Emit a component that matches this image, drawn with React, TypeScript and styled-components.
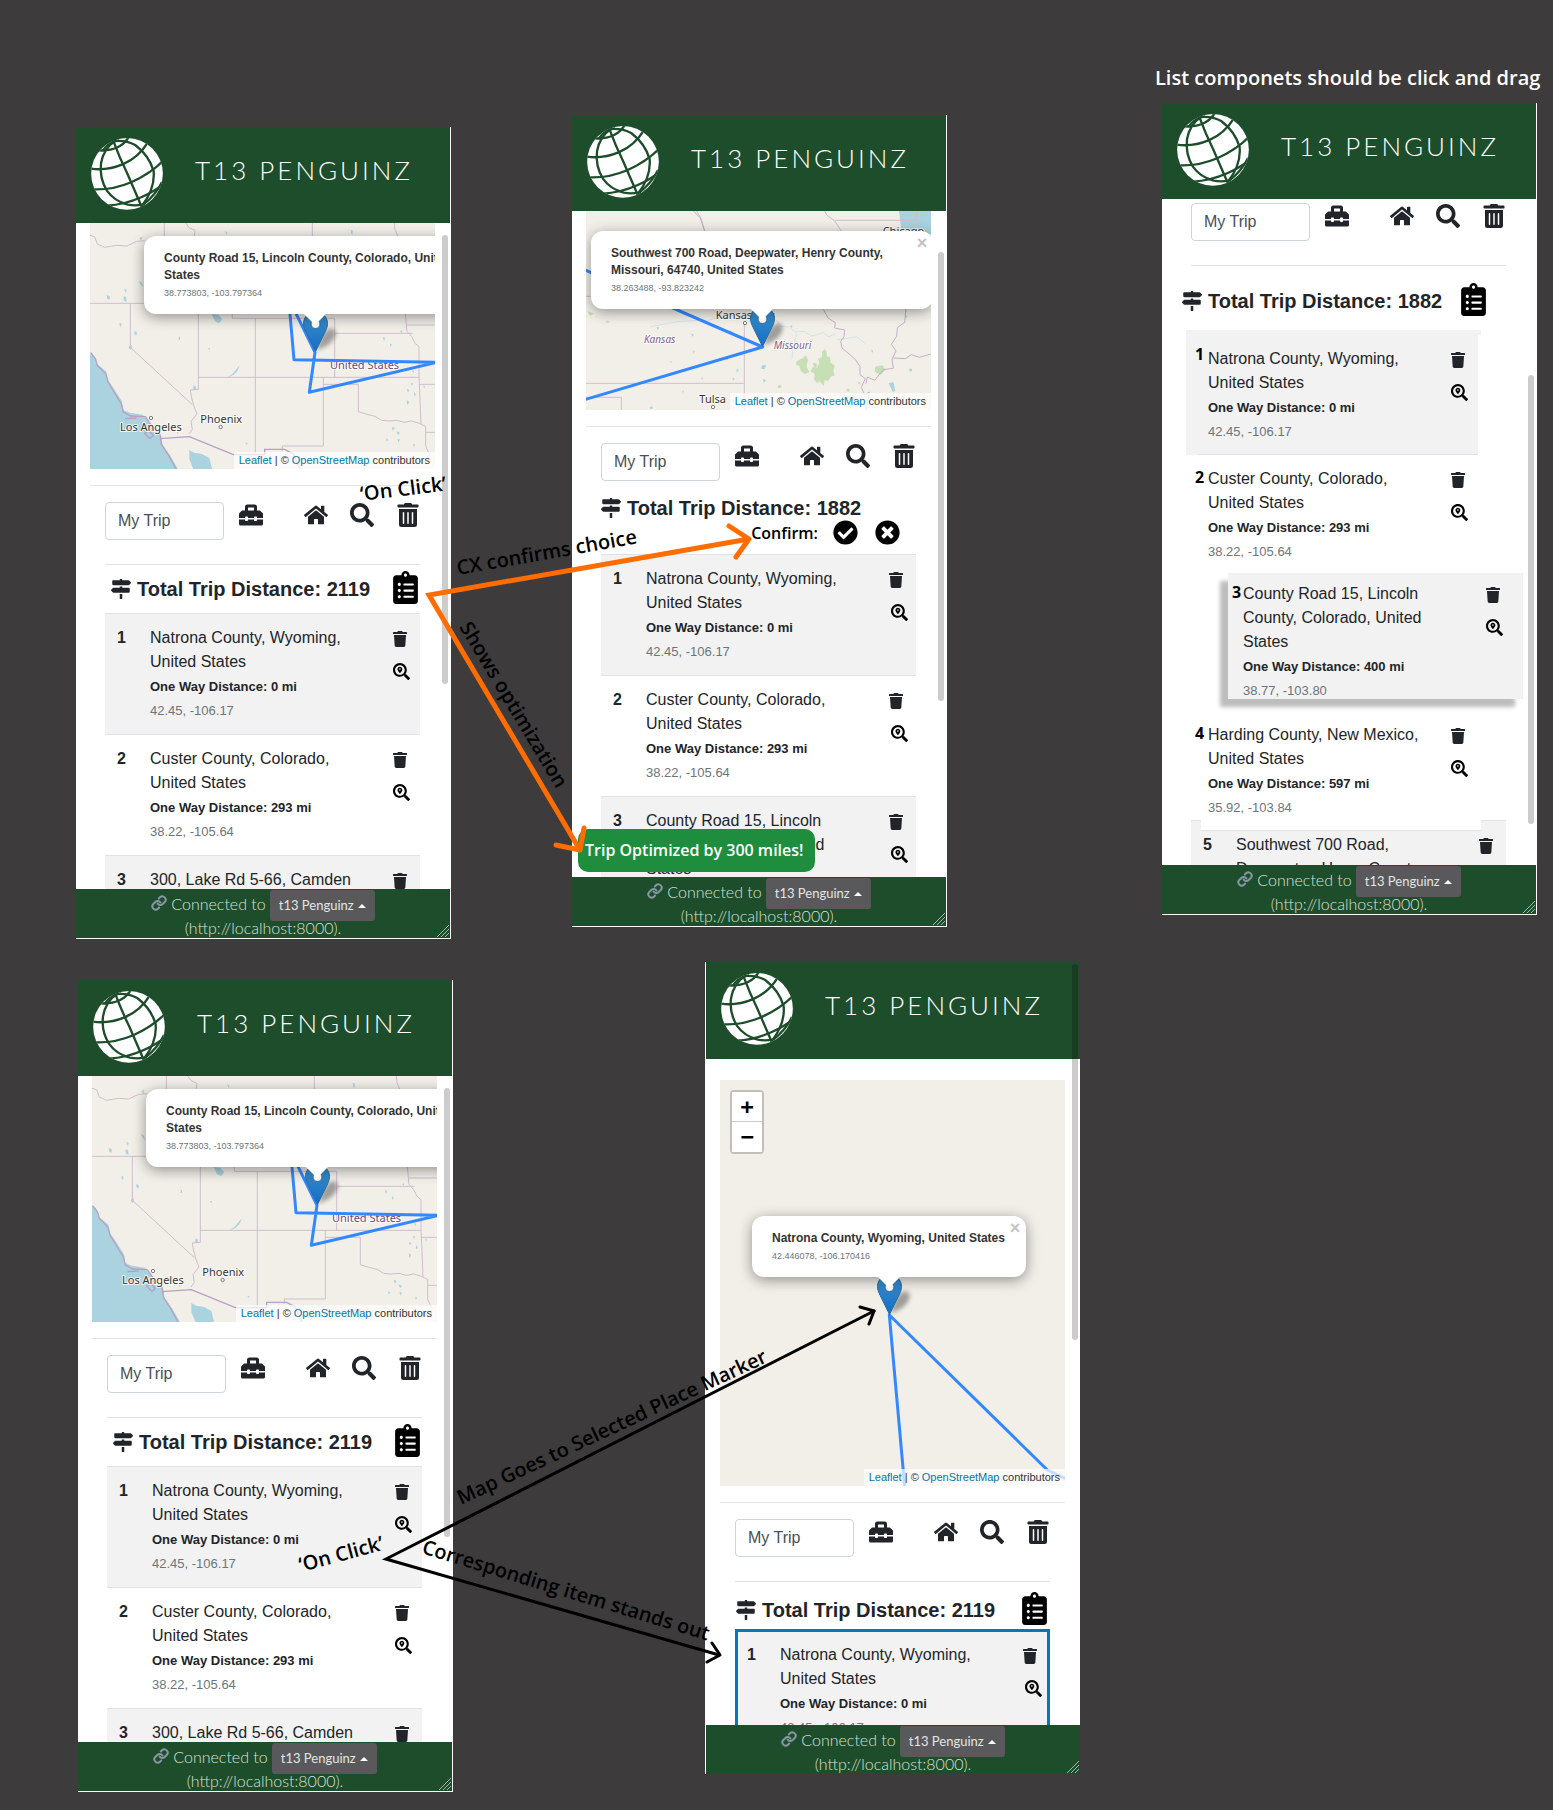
import React from "react";
import styled, { createGlobalStyle, css } from "styled-components";
import {
  FaCheckCircle,
  FaClipboardList,
  FaHome,
  FaMapSigns,
  FaSearch,
  FaSearchLocation,
  FaTimesCircle,
  FaToolbox,
  FaTrash,
  FaTrashAlt,
} from "react-icons/fa";
import { Link as LinkIcon } from "lucide-react";

const color = {
  canvas: "#3d3b3c",
  green: "#1e4d2b",
  ink: "#212529",
  muted: "#6c757d",
  line: "#dee2e6",
  stripe: "#f2f2f2",
  route: "#3388ff",
  land: "#f2efe9",
  water: "#aad3df",
  border: "#cfbdcd",
  orange: "#ff6c00",
};

const sans = `"Liberation Sans", Arial, sans-serif`;
const brand = `Lato, "Open Sans", sans-serif`;
const note = `"Open Sans", "Noto Sans", sans-serif`;

const GlobalStyle = createGlobalStyle`
  *, *::before, *::after { box-sizing: border-box; }
  body { margin: 0; background: ${color.canvas}; color: ${color.ink}; font: 16px/24px ${sans}; }
  button, input { font: inherit; margin: 0; }
`;

/* ---------- canvas ---------- */

const Canvas = styled.main`
  position: relative;
  min-height: 100vh;
  overflow: hidden;
`;

const Artboard = styled.section<{ $x: number; $y: number; $edge?: "left" }>`
  position: absolute;
  left: ${(p) => p.$x}px;
  top: ${(p) => p.$y}px;
  width: 375px;
  height: 812px;
  display: flex;
  flex-direction: column;
  background: #fff;
  ${(p) =>
    p.$edge === "left"
      ? css`
          border-left: 1px solid #fff;
        `
      : css`
          border-right: 1px solid #fff;
          border-bottom: 1px solid #fff;
        `}
`;

const Note = styled.p<{ $x: number; $y: number; $angle?: number; $light?: boolean }>`
  position: absolute;
  left: ${(p) => p.$x}px;
  top: ${(p) => p.$y}px;
  margin: 0;
  font: 600 20px/24px ${note};
  white-space: nowrap;
  color: ${(p) => (p.$light ? "#fff" : "#000")};
  transform: rotate(${(p) => p.$angle ?? 0}deg);
  transform-origin: 0 19px;
`;

const ArrowLayer = styled.svg`
  position: absolute;
  left: 0;
  top: 0;
  pointer-events: none;
`;

const Toast = styled.div`
  position: absolute;
  left: 578px;
  top: 829px;
  padding: 9px 12px 10px 7px;
  border-radius: 10px;
  background: #1e8e3e;
  color: #fff;
  font: 600 16px/24px ${note};
  white-space: nowrap;
`;

/* ---------- phone chrome ---------- */

const Header = styled.header<{ $tall?: boolean }>`
  flex: none;
  height: ${(p) => (p.$tall ? 97 : 96)}px;
  display: flex;
  align-items: flex-start;
  gap: 32px;
  padding: 11px 15px;
  background: ${color.green};
`;

const Brand = styled.h1`
  margin: 14px 0 0;
  color: #fff;
  font: 300 26px/36px ${brand};
  letter-spacing: 3px;
  white-space: nowrap;
`;

const Body = styled.div<{ $top?: number }>`
  flex: 1;
  min-height: 0;
  overflow: hidden;
  padding-top: ${(p) => p.$top ?? 0}px;
`;

const Footer = styled.footer`
  position: relative;
  flex: none;
  height: 49px;
  overflow: hidden;
  background: ${color.green};
  color: #d8e0da;
  font: 300 16px/24px ${brand};
  text-align: center;
`;

const FooterLine = styled.div`
  height: 27px;
  display: flex;
  justify-content: center;
  align-items: flex-start;
  gap: 4px;
  padding-top: 1px;
  svg {
    margin-top: 5px;
  }
  span {
    padding-top: 2px;
  }
`;

const ServerButton = styled.button`
  display: flex;
  align-items: center;
  gap: 4px;
  padding: 5px 9px;
  border: 0;
  border-radius: 3px;
  background: #59595b;
  color: #e4e4e4;
  font: 400 13px/21px ${brand};
  &::after {
    content: "";
    border: 4px solid transparent;
    border-top: 0;
    border-bottom-color: #fff;
  }
`;

const Grip = styled.svg`
  position: absolute;
  right: 1px;
  bottom: 1px;
`;

const Scrollbar = styled.div<{ $top: number; $height: number }>`
  position: absolute;
  right: 2px;
  top: ${(p) => p.$top}px;
  width: 6px;
  height: ${(p) => p.$height}px;
  border-radius: 3px;
  background: rgba(0, 0, 0, 0.2);
`;

/* ---------- map ---------- */

const MapFrame = styled.div<{ $height: number }>`
  position: relative;
  height: ${(p) => p.$height}px;
  margin: 0 15px 16px 14px;
  overflow: hidden;
  background: ${color.land};
  > svg:first-child {
    display: block;
    width: 100%;
    height: 100%;
  }
`;

const Pin = styled.div<{ $x: number; $y: number }>`
  position: absolute;
  left: ${(p) => p.$x}px;
  top: ${(p) => p.$y}px;
  width: 25px;
  height: 41px;
  svg {
    display: block;
    overflow: visible;
  }
`;

const Popup = styled.div<{ $width: number }>`
  position: absolute;
  left: 12px;
  bottom: 38px;
  width: ${(p) => p.$width}px;
  margin-left: -${(p) => Math.round(p.$width / 2)}px;
  padding: 14px 20px 13px;
  border-radius: 12px;
  background: #fff;
  box-shadow: 0 3px 14px rgba(0, 0, 0, 0.4);
  color: #333;
  font: 700 12px/17px ${sans};
  &::after {
    content: "";
    position: absolute;
    left: 50%;
    top: 100%;
    margin-left: -11px;
    border: 11px solid transparent;
    border-top-color: #fff;
    border-bottom: 0;
  }
  small {
    font-size: 9px;
    font-weight: 400;
    line-height: 1;
    color: ${color.muted};
  }
`;

const PopupClose = styled.button`
  position: absolute;
  right: 4px;
  top: 4px;
  padding: 0;
  border: 0;
  background: none;
  width: 14px;
  height: 16px;
  color: #c3c3c3;
  font: 700 18px/16px ${sans};
`;

const Attribution = styled.div`
  position: absolute;
  right: 0;
  bottom: 0;
  padding: 0 5px;
  background: rgba(255, 255, 255, 0.7);
  color: #333;
  font: 11px/17px ${sans};
  a {
    color: #0078a8;
    text-decoration: none;
  }
`;

const ZoomControl = styled.div`
  position: absolute;
  left: 10px;
  top: 10px;
  width: 34px;
  border: 2px solid rgba(0, 0, 0, 0.2);
  border-radius: 4px;
  background-clip: padding-box;
  button {
    display: block;
    width: 30px;
    height: 30px;
    padding: 0;
    border: 0;
    background: #fff;
    color: #000;
    font: 700 22px/30px "DejaVu Sans Mono", monospace;
  }
  button:first-child {
    border-bottom: 1px solid #ccc;
  }
`;

/* ---------- trip controls ---------- */

const Rule = styled.hr`
  height: 1px;
  margin: 0 15px 16px 14px;
  border: 0;
  background: rgba(0, 0, 0, 0.1);
`;

const Toolbar = styled.div<{ $tight?: boolean }>`
  display: flex;
  align-items: flex-start;
  margin: 0 30px ${(p) => (p.$tight ? 15 : 24)}px 29px;
  height: 38px;
  button {
    padding-top: 1px;
  }
`;

const TripName = styled.input`
  width: 119px;
  height: 38px;
  margin-right: 15px;
  padding: 6px 12px;
  border: 1px solid #ced4da;
  border-radius: 4px;
  background: #fff;
  color: #495057;
`;

const ToolGroup = styled.div`
  display: flex;
  gap: 22px;
  margin-left: auto;
`;

const IconButton = styled.button<{ $black?: boolean }>`
  display: block;
  padding: 0;
  border: 0;
  background: none;
  color: ${(p) => (p.$black ? "#000" : color.ink)};
  line-height: 0;
  svg {
    display: block;
  }
`;

const Summary = styled.div<{ $pad: string; $rule?: boolean }>`
  position: relative;
  display: flex;
  justify-content: space-between;
  align-items: center;
  padding: ${(p) => p.$pad};
  &::before {
    content: "";
    display: ${(p) => (p.$rule ? "block" : "none")};
    position: absolute;
    left: 29px;
    right: 30px;
    top: 0;
    height: 1px;
    background: ${color.line};
  }
  > button {
    margin: -6px 0 -3px;
  }
`;

const Total = styled.h2`
  display: flex;
  align-items: center;
  gap: 6px;
  margin: 0;
  font: 700 20px/24px ${sans};
  white-space: nowrap;
`;

const ConfirmBar = styled.div`
  display: flex;
  align-items: center;
  gap: 17px;
  height: 25px;
  margin: 0 46px 9px 0;
  justify-content: flex-end;
  color: #000;
  font: 600 16px/24px ${note};
  span {
    margin-right: -2px;
  }
`;

/* ---------- stop table ---------- */

const Stops = styled.table<{ $selected?: boolean }>`
  width: 315px;
  margin-left: 29px;
  border-collapse: separate;
  border-spacing: 0;
  table-layout: fixed;
  ${(p) =>
    p.$selected &&
    css`
      box-shadow: inset 0 0 0 3px #0877b6;
      background: ${color.stripe};
    `}
`;

const StopRow = styled.tr`
  &:nth-child(odd) {
    background: ${color.stripe};
  }
  &:nth-child(even) {
    background: #fff;
  }
  th,
  td {
    border-top: 1px solid ${color.line};
    padding: 12px 0 12px 12px;
    vertical-align: top;
    text-align: left;
  }
  th {
    width: 33px;
  }
  td:last-child {
    width: 39px;
    padding-bottom: 0;
  }
`;

const SelectedRow = styled(StopRow)`
  &&:nth-child(odd) {
    background: transparent;
  }
  && th,
  && td {
    border-top-color: transparent;
    padding-top: 13px;
  }
`;

const PlaceText = styled.div`
  width: 219px;
  strong,
  small {
    font-size: 13px;
    line-height: 1;
  }
  small {
    color: ${color.muted};
  }
`;

const RowActions = styled.div<{ $indent?: number }>`
  display: flex;
  flex-direction: column;
  gap: 16px;
  padding-top: 5px;
  button + button {
    margin-left: ${(p) => p.$indent ?? 0}px;
  }
`;

/* ---------- draggable list ---------- */

const DragList = styled.ol`
  list-style: none;
  margin: 0;
  padding: 0;
`;

const DragItem = styled.li<{ $kind: "first" | "plain" | "lifted" | "last" }>`
  position: relative;
  display: flex;
  width: 292px;
  height: 118px;
  margin-left: 24px;
  padding: 12px 10px 0 9px;
  > b {
    flex: none;
    width: 13px;
    color: #000;
    font: 700 16px/20px ${note};
  }
  > div:last-child {
    margin-left: auto;
  }
  ${(p) =>
    p.$kind === "first" &&
    css`
      height: 125px;
      padding-top: 17px;
      background: ${color.stripe};
      > b {
        line-height: 14px;
      }
      &::before {
        content: "";
        position: absolute;
        left: 100%;
        top: 0;
        width: 3px;
        height: 5px;
        background: ${color.stripe};
      }
      &::after {
        content: "";
        position: absolute;
        left: 12px;
        right: 0;
        bottom: 0;
        height: 1px;
        background: ${color.line};
      }
    `}
  ${(p) =>
    p.$kind === "lifted" &&
    css`
      z-index: 1;
      width: 295px;
      height: 126px;
      margin-left: 66px;
      padding: 9px 20px 0 4px;
      background: ${color.stripe};
      box-shadow: -8px 8px 4px #bdbdbd;
      > b {
        width: 11px;
      }
    `}
  ${(p) =>
    p.$kind === "last" &&
    css`
      height: 121px;
      padding-top: 24px;
      &::after {
        content: "";
        position: absolute;
        left: 15px;
        right: -3px;
        top: 121px;
        height: 11px;
        background: #fff;
        border-bottom: 1px solid ${color.line};
      }
    `}
`;

/* ---------- drawings ---------- */

const Globe = () => (
  <svg width="72" height="72" viewBox="94 85 215 215" aria-hidden="true">
    <clipPath id="globe-disc">
      <circle cx="201.500" cy="192" r="107" />
    </clipPath>
    <g clipPath="url(#globe-disc)">
      <rect x="94" y="85" width="215" height="215" fill="#fff" />
      <g fill="none" stroke={color.green} strokeWidth="7">
        <path d="M118 122 Q150 124 175 112 Q195 102 207 82" />
        <path d="M90 176 Q140 184 190 163 Q235 144 264 98" />
        <path d="M95 238 Q155 242 214 217 Q275 190 314 148" />
        <path d="M140 287 Q195 284 244 262 Q285 244 310 222" />
        <path d="M160 92 Q180 146 202 190 Q222 236 246 292" />
        <path d="M168 92 Q132 116 124 160 Q118 204 142 243 Q164 274 204 284 Q226 288 246 284" />
        <path d="M140 98 Q190 86 226 106 Q268 138 281 184 Q286 238 244 290" />
        <path d="M128 124 Q146 96 178 92" />
        <path d="M248 286 Q290 252 306 216" />
      </g>
    </g>
  </svg>
);

const MarkerIcon = () => (
  <svg width="25" height="41" viewBox="0 0 25 41" aria-hidden="true">
    <defs>
      <linearGradient id="pin-fill" x1="0" y1="0" x2="0" y2="1">
        <stop offset="0" stopColor="#3f8fc9" />
        <stop offset="1" stopColor="#126fc6" />
      </linearGradient>
      <filter id="pin-blur" x="-50%" y="-50%" width="200%" height="200%">
        <feGaussianBlur stdDeviation="2" />
      </filter>
    </defs>
    <path d="M13 40 L19 24 Q27 14 32 19 Q35 26 25 34 Z" fill="#000" opacity=".34" filter="url(#pin-blur)" />
    <path
      d="M12.500 .5C5.900 .5 .5 5.900 .5 12.500c0 3.300 1.300 6.300 2.800 9.300L12.500 40.500l9.200-18.700c1.500-3 2.800-6 2.800-9.300C24.500 5.900 19.100 .5 12.500 .5z"
      fill="url(#pin-fill)"
      stroke="#2e6c97"
    />
    <circle cx="12.500" cy="13" r="4.500" fill="#fff" stroke="#2e6c97" />
  </svg>
);

const halo = { paintOrder: "stroke" as const, stroke: "#fff", strokeWidth: 6, strokeOpacity: 0.8 };

const WestMap = () => (
  <svg viewBox="90 339 1035 738" preserveAspectRatio="xMinYMin slice" role="img" aria-label="Map of the western United States">
    <rect x="90" y="339" width="1035" height="738" fill={color.land} />
    <g fill={color.water}>
      <path d="M90 728l14 14 4 18 30 24 6 26 18 26 24 38 4 26 20 8 38 6 22 26 10 24 24 14 4 28 22 30 24 41H90z" />
      <path d="M388 1020l14 8 24 4 22 12 8 33h-56l-12-30z" />
      <path d="M455 612l20 2 12 14-10 12-12-6z" />
      <path d="M206 710l8-6 2 10-6 6zM140 555l10 4-2 10-6-2zM190 560l8 0 2 16-8-4zM192 536l8 4-2 10zM222 664l8 2 0 10-6-2zM178 640l6 0 0 8-4 2zM444 714l6 0-2 8zM356 680l4 0 0 10-4 0zM236 512l10 6 4 14-8-8zM400 826l8 4-2 10-6 0zM494 362l8 6-2 6zM872 360l6 0 0 14-4-2zM238 384l10-4-4 12z" />
      <path d="M968 680l8 4-4 8zM990 700l6 4-6 6zM1020 664l6-4 0 8zM1056 780l6 2-2 8zM1040 836l8 4-4 8zM1052 820l8 0-4 8zM1090 826l6 4-4 4zM1040 870l8 6-6 8zM1062 846l6 8-6 4zM996 950l8 4-6 8zM1010 964l10 4-6 8zM978 984l8 6-6 4zM1012 988l8 0-4 10zM1060 1000l6 6-6 4zM556 1000l6-2 0 8zM350 966l6 2-4 4z" />
      <path d="M540 765l-8 18-12 12-18 8 16-12z" />
    </g>
    <g fill="none" stroke={color.border} strokeWidth="3">
      <path d="M90 376l14 4 8 22 22 10 36-6 30 2 30-14 24-2M90 580H260M211 580V712L397 884M415 600V838l-24 2 4 24 6 22 10 26-18 22 4 24-10 14" />
      <path d="M517 600v25H824V802M415 802H1078M586 625V1030M824 670H1058M790 802V1008H667v14M790 823H895v82l26 8 24 6 20 12 22 2 24-2 22 6 22-4 20 6 22 10v60l14 30" />
      <path d="M313 339v39M757 339v39M1003 339l2 20 8 19M377 339l10 14 18 8-2 17M1035 600l4 44 2 20 14 16 10 20 12 10V802l2 40 4 100M1040 645h85M1078 823h47M1098 967h27" />
    </g>
    <g fill="none" stroke="#b99fc0" strokeWidth="4">
      <path d="M300 986l88-6 132 54h94v-16h60l26 14 20 45" />
      <path d="M92 728l14 18 6 20 26 26 6 24 40 66 6 24 22 12 44 2 22 32 22 22 4 28 22 34 22 41M254 970l12-8 14 14-10 10zM196 926l34-2" />
    </g>
    <g fontFamily="Noto Sans, sans-serif" fontSize="33" fill="#333">
      <text x="180" y="963" {...halo}>Los Angeles</text>
      <text x="421" y="938" {...halo}>Phoenix</text>
      <text x="810" y="777" fill="#6b4a78" {...halo}>United States</text>
    </g>
    <g fill="#fff" stroke="#444" strokeWidth="2">
      <circle cx="273" cy="924" r="5" />
      <circle cx="482" cy="951" r="5" />
    </g>
    <path d="M688 590L702 749L1130 757L748 847L765 727L698 590" fill="none" stroke={color.route} strokeWidth="9" strokeLinejoin="round" />
  </svg>
);

const MissouriMap = () => (
  <svg viewBox="108 333 1035 597" preserveAspectRatio="xMinYMin slice" role="img" aria-label="Map of Kansas and Missouri">
    <rect x="108" y="333" width="1035" height="597" fill={color.land} />
    <path d="M1047 333h96v70h-60l-30-20z" fill={color.water} />
    <g fill="#c6dfb5">
      <path d="M740 784l18-10 10-8 6 14-4 20 8 16-14 6-12-10-4-14-10-4zM816 756l8-10 6 10 0 14 10 0 2 18 12 8-4 18 4 12-12 4-8 14-10-4-2 18-14-14-6 6-10-12 2-16-12-8 6-12 14 0 6-14-4-12 12-4zM788 790l10-2 4 10-8 6zM976 800l22-4 8 14-14 14-18-8zM684 856l10 0 0 8-10 0zM802 890l12 0-2 14-10-4zM890 866l8 0 0 10-8-2zM922 850l8-6 2 10z" />
      <path d="M112 634l20 6-12 8zM170 660l10 6-12 4z" />
    </g>
    <g fill={color.water}>
      <path d="M636 796l12 0-4 12-10-2zM1016 850l14-4 6 26-8 4zM1078 806l8 0 0 8-8 0zM320 680l8 4-6 6zM310 720l8 4-4 4zM424 700l8 4-6 6zM360 782l6 4-4 2zM540 690l8 6-8 4zM560 806l6 4-6 8zM548 830l6 8-6 4zM398 870l4 4-4 6zM430 750l4 4-4 8zM456 830l4 8-6 0zM530 770l6 6-6 6zM1064 640l8 10-6 4zM964 748l6 4-4 8zM720 676l8 2-4 6zM300 920l8 0 0 6-8 0zM640 836l8 6-8 6z" />
    </g>
    <g fill="none" stroke="#c3dbe6" strokeWidth="2">
      <path d="M680 660l12 20 24 0 20 16 24-2 26 14 34-10 14 12 24-8M740 700l-10 40-4 36M860 720l60-10 24 20M540 640l-60 20-90 4-90 16" />
    </g>
    <g fill="none" stroke={color.border} strokeWidth="3">
      <path d="M855 361H1100V333M824 333l6 12 24 18 20 30M440 333l14 24 10 36M108 589h30M583 670V930M108 850H581M108 892H214V930" />
      <path d="M430 333l20 20 14 40M820 628l14 26 22 14-2 16 30 6-2 20-10 14 4 20 40 34 14 22 0 24 16 12-12 26 10 22 14-8-4 20-6 34M1068 627l-4 40-22 16-2 26-16 24 14 20-12 24 4 28-30 4-26 32-22-10-4 20M1030 774l36 2 18-12 24 8 35-10" stroke="#c4aec9" />
    </g>
    <g fontFamily="Noto Sans, sans-serif" fontSize="33" fill="#333">
      <text x="497" y="657" {...halo}>Kansas City</text>
      <text x="448" y="910" {...halo}>Tulsa</text>
      <text x="998" y="405" {...halo}>Chicago</text>
    </g>
    <g fontFamily="Noto Sans, sans-serif" fontStyle="italic" fontSize="30" fill="#83618f">
      <text x="282" y="730" {...halo}>Kansas</text>
      <text x="671" y="746" {...halo}>Missouri</text>
    </g>
    <g fill="#fff" stroke="#444" strokeWidth="2">
      <circle cx="585" cy="669" r="5" />
      <circle cx="489" cy="921" r="5" />
    </g>
    <path d="M100 508L638 741L100 900" fill="none" stroke={color.route} strokeWidth="9" strokeLinejoin="round" />
  </svg>
);

const PlainMap = () => (
  <svg viewBox="90 390 1035 1218" preserveAspectRatio="xMinYMin slice" role="img" aria-label="Map centred on Natrona County">
    <rect x="90" y="390" width="1035" height="1218" fill={color.land} />
    <path d="M645 1620L598 1095L1072 1560L1140 1592" fill="none" stroke={color.route} strokeWidth="9" strokeLinejoin="round" />
  </svg>
);

/* ---------- composed parts ---------- */

type Place = { n: number; name: string; miles?: number; at?: string };

const natrona: Place = { n: 1, name: "Natrona County, Wyoming, United States", miles: 0, at: "42.45, -106.17" };
const custer: Place = { n: 2, name: "Custer County, Colorado, United States", miles: 293, at: "38.22, -105.64" };
const lakeRoad: Place = { n: 3, name: "300, Lake Rd 5-66, Camden" };
const lincoln: Place = { n: 3, name: "County Road 15, Lincoln County, Colorado, United States", miles: 400, at: "38.77, -103.80" };
const harding: Place = { n: 4, name: "Harding County, New Mexico, United States", miles: 597, at: "35.92, -103.84" };
const deepwater: Place = { n: 5, name: "Southwest 700 Road, Deepwater, Henry County," };

function MapView(props: {
  height: number;
  drawing: React.ReactNode;
  pin: [number, number];
  popupWidth: number;
  place: string;
  at: string;
  zoom?: boolean;
}) {
  return (
    <MapFrame $height={props.height}>
      {props.drawing}
      {props.zoom && (
        <ZoomControl>
          <button aria-label="Zoom in">+</button>
          <button aria-label="Zoom out">−</button>
        </ZoomControl>
      )}
      <Attribution>
        <a href="#leaflet">Leaflet</a> | © <a href="#osm">OpenStreetMap</a> contributors
      </Attribution>
      <Pin $x={props.pin[0]} $y={props.pin[1]}>
        <MarkerIcon />
        <Popup $width={props.popupWidth}>
          {props.place}
          <br />
          <small>{props.at}</small>
          <PopupClose aria-label="Close popup">×</PopupClose>
        </Popup>
      </Pin>
    </MapFrame>
  );
}

const TripToolbar = ({ tight }: { tight?: boolean }) => (
  <Toolbar $tight={tight}>
    <TripName aria-label="Trip name" defaultValue="My Trip" />
    <IconButton aria-label="Trip tools"><FaToolbox size={24} /></IconButton>
    <ToolGroup>
      <IconButton aria-label="Home"><FaHome size={24} /></IconButton>
      <IconButton aria-label="Search"><FaSearch size={24} /></IconButton>
      <IconButton aria-label="Clear trip"><FaTrashAlt size={24} /></IconButton>
    </ToolGroup>
  </Toolbar>
);

function TripSummary(props: { miles: number; pad: string; rule?: boolean; optimize?: boolean }) {
  return (
    <Summary $pad={props.pad} $rule={props.rule}>
      <Total>
        <FaMapSigns size={20} />
        Total Trip Distance: {props.miles}
      </Total>
      {props.optimize && (
        <IconButton $black aria-label="Optimize trip">
          <FaClipboardList style={{ width: 25, height: 33 }} />
        </IconButton>
      )}
    </Summary>
  );
}

const PlaceDetails = ({ place }: { place: Place }) => (
  <PlaceText>
    {place.name}
    {place.at && (
      <>
        <br />
        <strong>One Way Distance: {place.miles} mi</strong>
        <br />
        <small>{place.at}</small>
      </>
    )}
  </PlaceText>
);

const PlaceActions = ({ indent, brief }: { indent?: number; brief?: boolean }) => (
  <RowActions $indent={indent}>
    <IconButton aria-label="Remove place"><FaTrash style={{ width: 14, height: 16 }} /></IconButton>
    {!brief && (
      <IconButton $black aria-label="Show on map"><FaSearchLocation size={17} /></IconButton>
    )}
  </RowActions>
);

function StopTable(props: { places: Place[]; indent?: number; selected?: boolean }) {
  const Row = props.selected ? SelectedRow : StopRow;
  return (
    <Stops $selected={props.selected}>
      <tbody>
        {props.places.map((place) => (
          <Row key={place.n}>
            <th scope="row">{place.n}</th>
            <td><PlaceDetails place={place} /></td>
            <td><PlaceActions indent={props.indent} brief={!place.at} /></td>
          </Row>
        ))}
      </tbody>
    </Stops>
  );
}

function Phone(props: {
  x: number;
  y: number;
  edge?: "left";
  bodyTop?: number;
  thumb: [number, number];
  children: React.ReactNode;
}) {
  return (
    <Artboard $x={props.x} $y={props.y} $edge={props.edge}>
      <Header $tall={props.edge === "left"}>
        <Globe />
        <Brand>T13 PENGUINZ</Brand>
      </Header>
      <Body $top={props.bodyTop}>{props.children}</Body>
      <Footer>
        <FooterLine>
          <LinkIcon size={16} strokeWidth={3} color="#8497a3" />
          <span>Connected to</span>
          <ServerButton>t13 Penguinz</ServerButton>
        </FooterLine>
        (http://localhost:8000).
        <Grip width="12" height="12" viewBox="0 0 12 12" aria-hidden="true">
          <path d="M0 12L12 0M4 12L12 4M8 12L12 8" stroke="#a9b5ac" strokeWidth="1" />
        </Grip>
      </Footer>
      <Scrollbar $top={props.thumb[0]} $height={props.thumb[1]} />
    </Artboard>
  );
}

const TripPhone = ({ x, y }: { x: number; y: number }) => (
  <Phone x={x} y={y} thumb={[108, 449]}>
    <MapView
      height={246}
      drawing={<WestMap />}
      pin={[213, 88]}
      popupWidth={342}
      place="County Road 15, Lincoln County, Colorado, United States"
      at="38.773803, -103.797364"
    />
    <Rule />
    <TripToolbar />
    <TripSummary miles={2119} pad="13px 32px 12px 35px" rule optimize />
    <StopTable places={[natrona, custer, lakeRoad]} />
  </Phone>
);

const dragged: { place: Place; kind: "first" | "plain" | "lifted" | "last" }[] = [
  { place: natrona, kind: "first" },
  { place: custer, kind: "plain" },
  { place: lincoln, kind: "lifted" },
  { place: harding, kind: "last" },
];

export default function App() {
  return (
    <Canvas>
      <GlobalStyle />

      <TripPhone x={76} y={127} />

      <Phone x={572} y={115} thumb={[137, 449]}>
        <MapView
          height={199}
          drawing={<MissouriMap />}
          pin={[164, 95]}
          popupWidth={342}
          place="Southwest 700 Road, Deepwater, Henry County, Missouri, 64740, United States"
          at="38.263488, -93.823242"
        />
        <Rule />
        <TripToolbar tight />
        <TripSummary miles={1882} pad="0 30px 0 29px" />
        <ConfirmBar>
          <span>Confirm:</span>
          <IconButton $black aria-label="Confirm"><FaCheckCircle size={25} /></IconButton>
          <IconButton $black aria-label="Cancel"><FaTimesCircle size={25} /></IconButton>
        </ConfirmBar>
        <StopTable places={[natrona, custer, lincoln]} indent={2} />
      </Phone>

      <Phone x={1162} y={103} bodyTop={4} thumb={[272, 449]}>
        <TripToolbar />
        <TripSummary miles={1882} pad="24px 50px 17px 20px" rule optimize />
        <DragList>
          {dragged.map(({ place, kind }) => (
            <DragItem key={place.n} $kind={kind}>
              <b>{place.n}</b>
              <PlaceDetails place={place} />
              <PlaceActions />
            </DragItem>
          ))}
        </DragList>
        <StopTable places={[deepwater]} />
      </Phone>

      <TripPhone x={78} y={980} />

      <Phone x={705} y={962} edge="left" bodyTop={21} thumb={[2, 376]}>
        <MapView
          height={406}
          drawing={<PlainMap />}
          pin={[157, 194]}
          popupWidth={274}
          place="Natrona County, Wyoming, United States"
          at="42.446078, -106.170416"
          zoom
        />
        <Rule />
        <TripToolbar />
        <TripSummary miles={2119} pad="17px 33px 7px 30px" rule optimize />
        <StopTable places={[natrona]} indent={2} selected />
      </Phone>

      <Toast role="status">Trip Optimized by 300 miles!</Toast>

      <ArrowLayer width="900" height="1700" viewBox="0 0 900 1700" fill="none" aria-hidden="true">
        <g stroke={color.orange} strokeWidth="5" strokeLinecap="round">
          <path d="M580 850L429 595L749 539" strokeLinecap="butt" />
          <path d="M729 526L749 539L736 557M556 845L580 850L584 828" strokeLinejoin="round" />
        </g>
        <g stroke="#000" strokeWidth="3" strokeLinecap="round">
          <path d="M874 1311L386 1559L719 1655" />
          <path d="M860 1307L874 1311L869 1324M712 1643L720 1655L707 1662" strokeLinejoin="round" />
        </g>
      </ArrowLayer>

      <Note $x={1155} $y={66} $light>List componets should be click and drag</Note>
      <Note $x={361} $y={482} $angle={-7}>‘On Click’</Note>
      <Note $x={458} $y={556} $angle={-10}>CX confirms choice</Note>
      <Note $x={459} $y={608} $angle={59}>Shows optimization</Note>
      <Note $x={461} $y={1486} $angle={-25}>Map Goes to Selected Place Marker</Note>
      <Note $x={421} $y={1534} $angle={17}>Corresponding item stands out</Note>
      <Note $x={301} $y={1553} $angle={-15}>‘On Click’</Note>
    </Canvas>
  );
}
